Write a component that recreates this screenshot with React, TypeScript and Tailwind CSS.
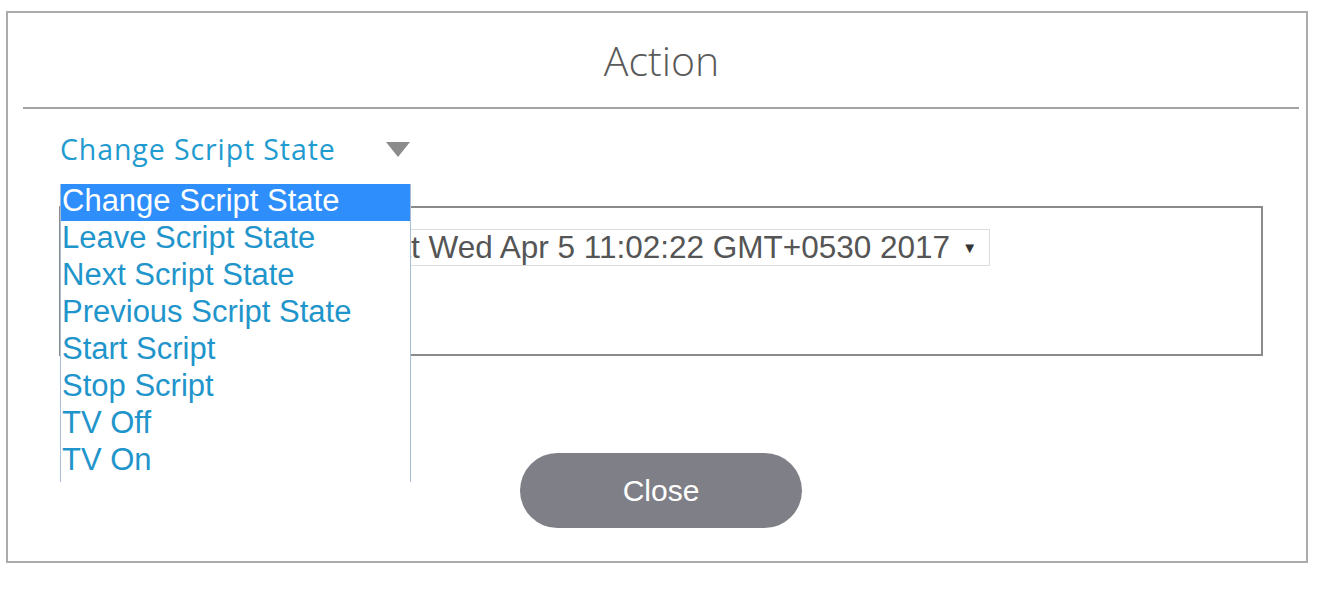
import { useState } from "react";

const OPTIONS = [
  "Change Script State",
  "Leave Script State",
  "Next Script State",
  "Previous Script State",
  "Start Script",
  "Stop Script",
  "TV Off",
  "TV On",
];

export default function App() {
  const [selected] = useState(0);

  return (
    <div className="min-h-[590px] bg-white pl-[6px] pt-[11px]">
      <div className="relative h-[552px] w-[1302px] border-2 border-[#ababab] bg-white">
        <div className="flex h-[94px] items-center justify-center pl-[9px]">
          <h1 className="text-[41px] font-light leading-none text-[#5a5a5a] [font-family:'Open_Sans',sans-serif]">Action</h1>
        </div>
        <div className="ml-[15px] mr-[7px] h-[2px] bg-[#a3a3a3]" />

        <div className="mt-[22px] flex items-center pl-[52px]">
          <span className="text-[28.5px] leading-[36px] tracking-[0.9px] text-[#1f9bcf] [font-family:'Open_Sans',sans-serif]">{OPTIONS[selected]}</span>
          <svg className="ml-[50px] mt-[1px]" width="24" height="15" viewBox="0 0 24 15">
            <path d="M0 0 H24 L12 15 Z" fill="#8c8c8c" />
          </svg>
        </div>

        <div className="ml-[51px] mt-[39px] flex h-[150px] w-[1204px] flex-col border-2 border-[#8a8a8a] pt-[21px]">
          <div className="mr-[271px] flex justify-end">
            <div className="flex h-[37px] items-center gap-[12px] border border-[#dcdcdc] pl-[6px] pr-[12px] text-[31.5px] text-[#555555] [font-family:'Liberation_Sans',Arial,sans-serif]">
              <span className="leading-none">Start at Wed Apr 5 11:02:22 GMT+0530 2017</span>
              <span className="text-[15px] leading-none text-[#333]">▼</span>
            </div>
          </div>
        </div>

        <div className="mt-[97px] ml-[512px]">
          <button type="button" className="flex h-[75px] w-[282px] items-center justify-center rounded-full bg-[#7f8087] text-[30px] text-white [font-family:'Liberation_Sans',Arial,sans-serif]">
            Close
          </button>
        </div>

        <ul className="absolute left-[52px] top-[171px] h-[298px] w-[351px] overflow-hidden border-x border-[#a9bdd6] bg-white [font-family:'Liberation_Sans',Arial,sans-serif]">
          {OPTIONS.map((opt, i) => (
            <li
              key={opt}
              className={
                i === selected
                  ? "h-[37px] bg-[#2e8ffc] pl-[1px] text-[31px] leading-[33px] text-white"
                  : "h-[37px] pl-[1px] text-[31px] leading-[33px] text-[#1f95cb]"
              }
            >
              {opt}
            </li>
          ))}
        </ul>
      </div>
    </div>
  );
}
